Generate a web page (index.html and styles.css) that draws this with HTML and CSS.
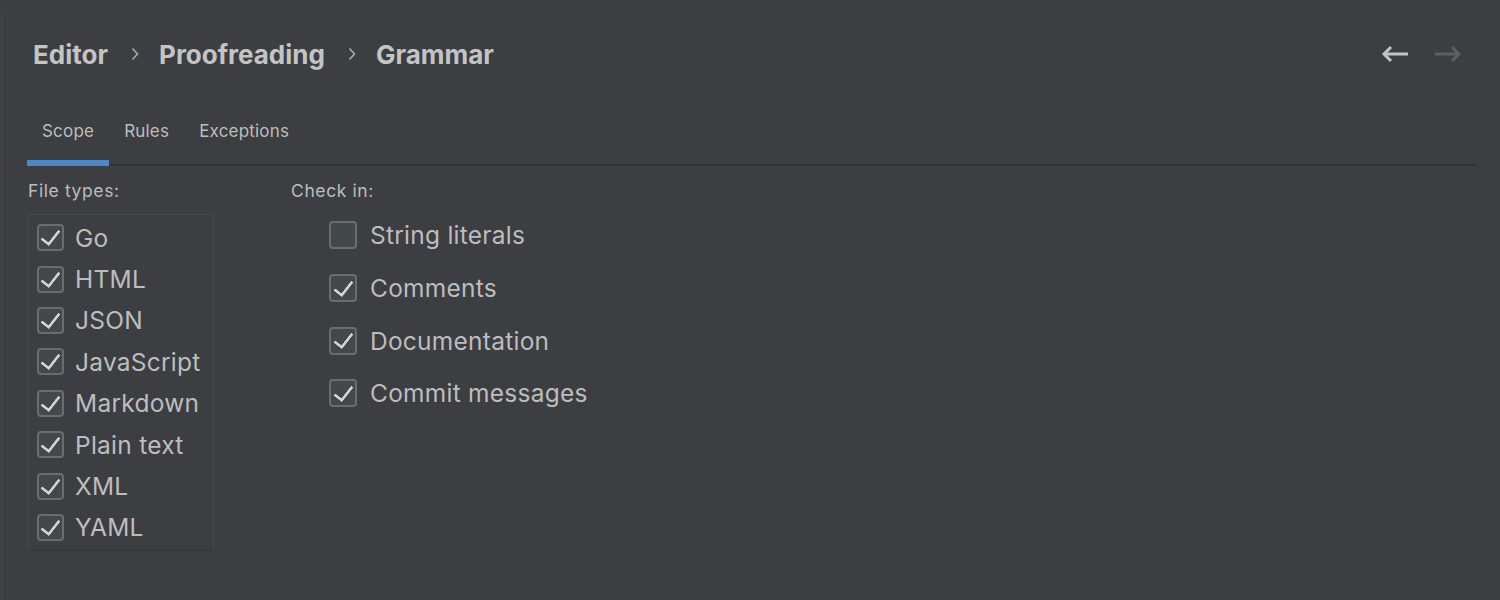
FILE: index.html
```html
<!DOCTYPE html>
<html lang="en">
<head>
    <meta charset="UTF-8">
    <title>Grammar</title>
    <link rel="stylesheet" href="styles.css">
</head>
<body>
    <div class="frame">
        <div class="header">
            <div class="crumbs">
                <span>Editor</span>
                <svg class="chev" width="8" height="14" viewBox="0 0 8 14"><path d="M1.5 1.5 L6.5 7 L1.5 12.5" fill="none" stroke="#a9abad" stroke-width="1.6"/></svg>
                <span>Proofreading</span>
                <svg class="chev" width="8" height="14" viewBox="0 0 8 14"><path d="M1.5 1.5 L6.5 7 L1.5 12.5" fill="none" stroke="#a9abad" stroke-width="1.6"/></svg>
                <span>Grammar</span>
            </div>
            <div class="nav">
                <svg width="28" height="18" viewBox="0 0 28 18"><path d="M27 9 H3 M10 2 L3 9 L10 16" fill="none" stroke="#c4c4c4" stroke-width="3"/></svg>
                <svg width="28" height="18" viewBox="0 0 28 18"><path d="M1 9 H25 M18 2 L25 9 L18 16" fill="none" stroke="#5d6062" stroke-width="3"/></svg>
            </div>
        </div>

        <div class="tabs">
            <div class="tab active">Scope</div>
            <div class="tab">Rules</div>
            <div class="tab">Exceptions</div>
        </div>

        <div class="content">
            <div class="col">
                <div class="caption">File types:</div>
                <div class="filebox">
                    <label class="row"><span class="box on"></span>Go</label>
                    <label class="row"><span class="box on"></span>HTML</label>
                    <label class="row"><span class="box on"></span>JSON</label>
                    <label class="row"><span class="box on"></span>JavaScript</label>
                    <label class="row"><span class="box on"></span>Markdown</label>
                    <label class="row"><span class="box on"></span>Plain text</label>
                    <label class="row"><span class="box on"></span>XML</label>
                    <label class="row"><span class="box on"></span>YAML</label>
                </div>
            </div>
            <div class="col checkin">
                <div class="caption">Check in:</div>
                <div class="checks">
                    <label class="row big"><span class="box"></span>String literals</label>
                    <label class="row big"><span class="box on"></span>Comments</label>
                    <label class="row big"><span class="box on"></span>Documentation</label>
                    <label class="row big"><span class="box on"></span>Commit messages</label>
                </div>
            </div>
        </div>
    </div>
</body>
</html>
```

FILE: styles.css
```css
*{
    margin: 0;
    padding: 0;
    box-sizing: border-box;
}
html, body{
    height: 100%;
    background-color: #3c3e41;
    font-family: Inter, "Liberation Sans", sans-serif;
    color: #bcbdbe;
}
body{
    padding: 13px 0 0 1px;
}
.frame{
    height: 100%;
    border-left: 1px solid #48494c;
}
.header{
    height: 82px;
    display: flex;
    align-items: center;
    justify-content: space-between;
    padding: 0 38px 0 31px;
}
.crumbs{
    display: flex;
    align-items: center;
    font-size: 26px;
    font-weight: 700;
    color: #c3c4c5;
}
.chev{
    margin: 0 20px 0 23px;
}
.nav{
    display: flex;
    gap: 25px;
}
.tabs{
    display: flex;
    margin: 0 23px 0 25px;
    border-bottom: 2px solid #303234;
}
.tab{
    padding: 22px 15px 15px;
    line-height: 28px;
    font-size: 17px;
    letter-spacing: 0.2px;
    border-bottom: 6px solid transparent;
    margin-bottom: -2px;
}
.tab.active{
    border-bottom-color: #4a88c7;
}
.content{
    display: flex;
    padding: 15px 0 0 26px;
}
.caption{
    font-size: 17.5px;
    line-height: 20px;
    letter-spacing: 0.6px;
}
.checkin{
    margin-left: 77px;
}
.filebox{
    margin-top: 13px;
    width: 186px;
    border: 1px solid #47494b;
    border-bottom-color: #333537;
    padding: 2px 0 2px 8px;
}
.row{
    display: flex;
    align-items: center;
    height: 41.4px;
    font-size: 24.5px;
    letter-spacing: 0.25px;
    gap: 11px;
}
.box{
    width: 27px;
    height: 27px;
    border: 2px solid #6a6d70;
    border-radius: 4px;
    background-color: #43494a;
    display: flex;
    align-items: center;
    justify-content: center;
}
.box.on::after{
    content: "";
    width: 8px;
    height: 16px;
    border: solid #d2d3d4;
    border-width: 0 3.5px 3.5px 0;
    border-radius: 1px;
    transform: translate(0, -2px) rotate(38deg);
}
.checks{
    margin: 8px 0 0 38px;
}
.row.big{
    height: 52.7px;
    gap: 13px;
}
.row.big .box{
    width: 28px;
    height: 28px;
}
```
